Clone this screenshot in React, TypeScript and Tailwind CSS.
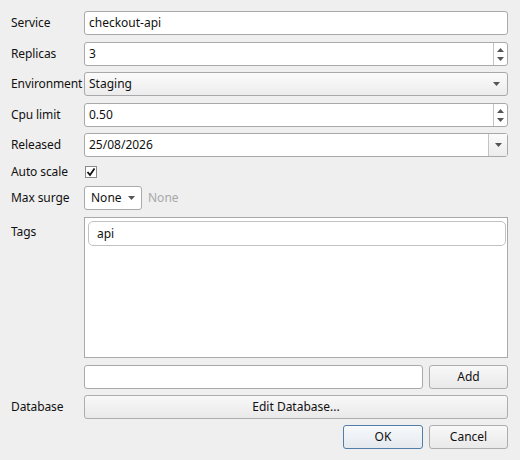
import React from 'react';

const font = { fontFamily: '"Noto Sans", "Liberation Sans", sans-serif' };

const Label = ({ children, top = false }: { children: React.ReactNode; top?: boolean }) => (
  <div className={`w-[73px] shrink-0 text-[12px] text-[#111] tracking-[-0.1px] ${top ? 'pt-[6px]' : 'flex items-center'}`}>
    {children}
  </div>
);

const TriUp = () => (
  <svg width="7" height="4" viewBox="0 0 7 4"><path d="M0 4 L3.5 0 L7 4 Z" fill="#555" /></svg>
);
const TriDown = () => (
  <svg width="7" height="4" viewBox="0 0 7 4"><path d="M0 0 L7 0 L3.5 4 Z" fill="#555" /></svg>
);

const TextBox = ({ value }: { value?: string }) => (
  <div className="flex-1 h-full flex items-center bg-white border border-[#a9a9a9] rounded-[3px] pl-[4px] text-[12px] text-[#111]">
    {value}
  </div>
);

const SpinBox = ({ value }: { value: string }) => (
  <div className="flex-1 h-full flex bg-white border border-[#a9a9a9] rounded-[3px] text-[12px] text-[#111]">
    <div className="flex-1 flex items-center pl-[4px]">{value}</div>
    <div className="w-[14px] border-l border-[#c4c4c4] flex flex-col items-center justify-center gap-[5px]">
      <TriUp />
      <TriDown />
    </div>
  </div>
);

const Button = ({ children, primary = false, className = '' }: { children: React.ReactNode; primary?: boolean; className?: string }) => (
  <div
    className={`h-full flex items-center justify-center rounded-[3px] border text-[12px] text-[#111] bg-gradient-to-b ${
      primary ? 'border-[#4f7ea8] from-[#f8fafc] to-[#e4e9ee]' : 'border-[#adadad] from-[#f8f8f8] to-[#e9e9e9]'
    } ${className}`}
  >
    {children}
  </div>
);

export default function App() {
  return (
    <div className="w-[520px] h-[460px] bg-[#efefef] pl-[11px] pr-[12px] pt-[11px] flex flex-col" style={font}>
      <div className="flex h-[24px]">
        <Label>Service</Label>
        <TextBox value="checkout-api" />
      </div>
      <div className="flex h-[24px] mt-[7px]">
        <Label>Replicas</Label>
        <SpinBox value="3" />
      </div>
      <div className="flex h-[24px] mt-[6px]">
        <Label>Environment</Label>
        <div className="flex-1 h-full flex items-center justify-between border border-[#a9a9a9] rounded-[3px] pl-[4px] pr-[7px] text-[12px] text-[#111] bg-gradient-to-b from-[#fbfbfb] to-[#ececec]">
          <span>Staging</span>
          <TriDown />
        </div>
      </div>
      <div className="flex h-[24px] mt-[7px]">
        <Label>Cpu limit</Label>
        <SpinBox value="0.50" />
      </div>
      <div className="flex h-[24px] mt-[6px]">
        <Label>Released</Label>
        <div className="flex-1 h-full flex bg-white border border-[#a9a9a9] rounded-[3px] text-[12px] text-[#111]">
          <div className="flex-1 flex items-center pl-[4px]">25/08/2026</div>
          <div className="w-[19px] border-l border-[#c4c4c4] bg-gradient-to-b from-[#fbfbfb] to-[#ececec] flex items-center justify-center">
            <TriDown />
          </div>
        </div>
      </div>
      <div className="flex h-[24px] mt-[3px]">
        <Label>Auto scale</Label>
        <div className="flex items-center pl-[1px]">
          <div className="w-[12px] h-[12px] bg-white border border-[#8a8a8a] flex items-center justify-center">
            <svg width="10" height="10" viewBox="0 0 10 10">
              <path d="M1.5 5 L4 8 L8.5 1.5" fill="none" stroke="#111" strokeWidth="1.8" />
            </svg>
          </div>
        </div>
      </div>
      <div className="flex h-[24px] mt-[2px]">
        <Label>Max surge</Label>
        <div className="w-[58px] h-full flex items-center justify-between border border-[#a9a9a9] rounded-[3px] pl-[6px] pr-[6px] text-[12px] text-[#111] bg-white">
          <span>None</span>
          <TriDown />
        </div>
        <div className="flex items-center ml-[6px] text-[12px] text-[#a8a8a8]">None</div>
      </div>
      <div className="flex mt-[7px]">
        <Label top>Tags</Label>
        <div className="flex-1 flex flex-col">
          <div className="h-[141px] bg-white border border-[#a9a9a9] p-[3px] pr-[1px]">
            <div className="h-[25px] flex items-center border border-[#c2c2c2] rounded-[5px] pl-[8px] text-[12px] text-[#111]">
              api
            </div>
          </div>
          <div className="flex h-[24px] mt-[7px] gap-[6px]">
            <TextBox />
            <Button className="w-[79px]">Add</Button>
          </div>
        </div>
      </div>
      <div className="flex h-[24px] mt-[6px]">
        <Label>Database</Label>
        <Button className="flex-1">Edit Database...</Button>
      </div>
      <div className="flex h-[24px] mt-[6px] justify-end gap-[6px]">
        <Button primary className="w-[80px]">OK</Button>
        <Button className="w-[79px]">Cancel</Button>
      </div>
    </div>
  );
}
